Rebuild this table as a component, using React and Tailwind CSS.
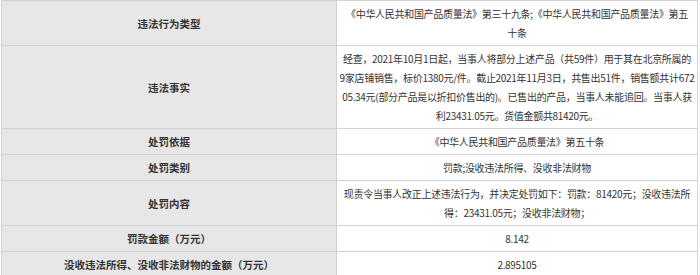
import React from "react";

const rows = [
  {
    label: "违法行为类型",
    lines: [
      "《中华人民共和国产品质量法》第三十九条;《中华人民共和国产品质量法》第五",
      "十条",
    ],
  },
  {
    label: "违法事实",
    lines: [
      "经查，2021年10月1日起，当事人将部分上述产品（共59件）用于其在北京所属的",
      "9家店铺销售，标价1380元/件。截止2021年11月3日，共售出51件，销售额共计672",
      "05.34元(部分产品是以折扣价售出的)。已售出的产品，当事人未能追回。当事人获",
      "利23431.05元。货值金额共81420元。",
    ],
  },
  { label: "处罚依据", lines: ["《中华人民共和国产品质量法》第五十条"] },
  { label: "处罚类别", lines: ["罚款;没收违法所得、没收非法财物"] },
  {
    label: "处罚内容",
    lines: [
      "现责令当事人改正上述违法行为，并决定处罚如下：罚款：81420元；没收违法所",
      "得：23431.05元；没收非法财物；",
    ],
  },
  { label: "罚款金额（万元）", lines: ["8.142"] },
  { label: "没收违法所得、没收非法财物的金额（万元）", lines: ["2.895105"] },
];

const App = () => {
  return (
    <div
      className="w-[700px] h-[275px] bg-white overflow-hidden"
      style={{ fontFamily: '"Noto Sans CJK SC", "Noto Sans", sans-serif' }}
    >
      <table className="ml-px w-[697px] border-collapse border border-[#d2d2d2] leading-[19px] text-[#333333] table-fixed">
        <colgroup>
          <col className="w-[335px]" />
          <col />
        </colgroup>
        <tbody>
          {rows.map((row) => (
            <tr key={row.label}>
              <td className="border border-[#d2d2d2] bg-[#e7e7e7] px-2 py-[3px] text-center text-[10.5px] font-semibold">
                {row.label}
              </td>
              <td className="border border-[#d2d2d2] bg-white px-0 py-[3px] text-center text-[10px] tracking-[-0.3px]">
                {row.lines.map((line, i) => (
                  <div key={i} className="whitespace-nowrap">
                    {line}
                  </div>
                ))}
              </td>
            </tr>
          ))}
        </tbody>
      </table>
    </div>
  );
};

export default App;
